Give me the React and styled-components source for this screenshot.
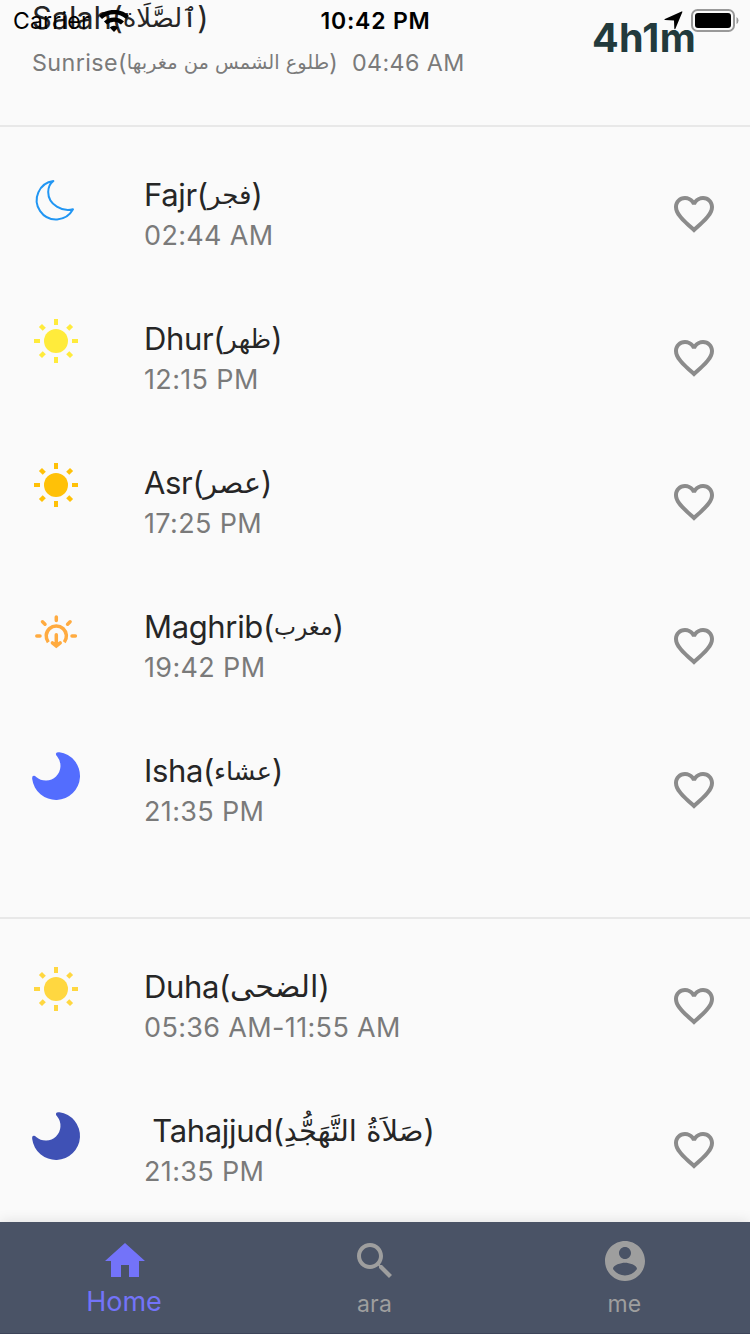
import React from 'react';
import styled, { createGlobalStyle } from 'styled-components';

const Global = createGlobalStyle`
  * { box-sizing: border-box; }
  body { margin: 0; background: #fafafa; font-family: Inter, "DejaVu Sans", sans-serif; }
`;

const Screen = styled.div`
  position: relative;
  display: flex;
  flex-direction: column;
  width: 750px;
  height: 1334px;
  overflow: hidden;
  background: #fafafa;
`;

const StatusBar = styled.div`
  position: absolute;
  inset: 0 0 auto 0;
  height: 41px;
  z-index: 3;
  display: grid;
  grid-template-columns: 1fr auto 1fr;
  align-items: center;
  padding: 0 10px 0 13px;
  color: #000;
`;

const Carrier = styled.div`
  display: flex;
  align-items: center;
  gap: 9px;
  font-size: 23px;
  letter-spacing: 0.2px;
`;

const Clock = styled.div`
  margin: 0 1px 0 -1px;
  font-size: 23px;
  font-weight: 600;
  letter-spacing: 0.8px;
`;

const StatusEnd = styled.div`
  display: flex;
  align-items: center;
  justify-content: flex-end;
  gap: 8px;
`;

const Header = styled.header`
  flex: none;
  display: flex;
  justify-content: space-between;
  height: 127px;
  padding: 0 54px 0 32px;
  border-bottom: 2px solid #e8e8e8;
`;

const Heading = styled.div`
  display: flex;
  height: 42px;
  line-height: 42px;
  margin-top: -3px;
  font-size: 31px;
  letter-spacing: -0.2px;
  color: #262626;
  white-space: pre;
`;

const Caption = styled.div`
  display: flex;
  height: 32px;
  margin-top: 8px;
  line-height: 32px;
  font-size: 23.3px;
  letter-spacing: 0.4px;
  color: #7a7a7a;
  white-space: pre;
`;

const Countdown = styled.div`
  padding-top: 14px;
  line-height: 48px;
  font-size: 39.5px;
  font-weight: 700;
  letter-spacing: 0.3px;
  color: #223a3c;
`;

const Section = styled.section`
  flex: none;
  padding: 15px 0 ${p => (p.$last ? 0 : 55)}px;
  border-bottom: ${p => (p.$last ? 0 : 2)}px solid #e8e8e8;
`;

const Row = styled.div`
  display: grid;
  grid-template-columns: 48px 1fr 48px;
  column-gap: 64px;
  height: 144px;
  padding: 34px 32px 0;
`;

const RowIcon = styled.svg`
  width: 48px;
  height: 48px;
  overflow: visible;
`;

const Title = styled.div`
  height: 40px;
  line-height: 40px;
  margin-top: -1px;
  display: flex;
  font-size: 31px;
  letter-spacing: -0.35px;
  color: #262626;
  white-space: pre;
`;

const Arabic = styled.bdi`
  font-family: "DejaVu Sans", sans-serif;
  font-size: ${p => p.$size}px;
  letter-spacing: 0;
`;

const Time = styled.div`
  height: 40px;
  line-height: 40px;
  margin-top: 1px;
  font-size: 27px;
  letter-spacing: 0.35px;
  color: #7a7a7a;
`;

const Heart = styled.svg`
  width: 48px;
  height: 48px;
  margin-top: 14px;
  fill: #8b8b8b;
`;

const NavBar = styled.nav`
  position: absolute;
  inset: auto 0 0 0;
  z-index: 2;
  display: grid;
  grid-template-columns: repeat(3, 1fr);
  height: 112px;
  background: #4a5366;
  border-bottom: 1px solid #3d4459;
  box-shadow: 0 -1px 12px rgba(0, 0, 0, 0.1);
`;

const NavItem = styled.div`
  display: flex;
  flex-direction: column;
  align-items: center;
  padding-top: 15px;
  color: ${p => (p.$active ? '#7373f9' : '#9e9e9e')};
`;

const NavIcon = styled.svg`
  width: 48px;
  height: 48px;
  fill: currentColor;
`;

const NavLabel = styled.div`
  line-height: 34px;
  margin-top: ${p => (p.$active ? 0 : 2)}px;
  margin-right: ${p => (p.$active ? 2 : 1)}px;
  font-size: ${p => (p.$active ? 27 : 23)}px;
  letter-spacing: ${p => (p.$active ? 0 : 0.2)}px;
`;

const Sun = ({ color }) => (
  <RowIcon viewBox="0 0 48 48" fill={color}>
    <circle cx="24" cy="21" r="12" />
    {[0, 90, 180, 270].map(a => (
      <rect key={a} x="22" y="-1" width="4" height="6" transform={`rotate(${a} 24 21)`} />
    ))}
    {[45, 135, 225, 315].map(a => (
      <rect key={a} x="21.8" y="-1" width="4.4" height="5.4" transform={`rotate(${a} 24 21)`} />
    ))}
  </RowIcon>
);

const Moon = ({ color }) => (
  <RowIcon viewBox="0 0 48 48" fill={color}>
    <path d="M27.5 .2A24 24 0 1 1 .2 27Q-.2 23.5 2 23.7Q3 23.8 4.2 25A14.7 14.7 0 0 0 25.2 4.6Q23.5 2.6 24 1.4Q24.5-.1 27.5 .2Z" />
  </RowIcon>
);

const MoonOutline = ({ color }) => (
  <RowIcon viewBox="0 0 48 48" fill="none" stroke={color} strokeWidth="2" strokeLinejoin="round">
    <path d="M21.4 5A19.3 19.3 0 1 0 41 33.3C31 36.4 16.2 29 16.2 16C16.2 11 18.4 7.2 21.4 5Z" />
  </RowIcon>
);

const Sunset = ({ color }) => (
  <RowIcon viewBox="0 0 48 48" fill="none" stroke={color} strokeWidth="3.5" strokeLinecap="round">
    <path d="M16.3 34.2A10.1 10.1 0 1 1 32.3 34.2" strokeLinecap="butt" />
    <path d="M24.3 26.8V37M20.4 34.8L24.3 38L28.2 34.8M24.3 9V12.4M4.8 27.9H8M40 27.9H43.4M10.5 13.8L13 16.2M38.1 13.8L35.6 16.2" />
  </RowIcon>
);

const ICONS = { sun: Sun, moon: Moon, moonOutline: MoonOutline, sunset: Sunset };

const DAILY = [
  { name: 'Fajr', arabic: 'فجر', size: 26.2, time: '02:44 AM', icon: 'moonOutline', color: '#2196f3' },
  { name: 'Dhur', arabic: 'ظهر', size: 26, time: '12:15 PM', icon: 'sun', color: '#ffeb3b' },
  { name: 'Asr', arabic: 'عصر', size: 28.6, time: '17:25 PM', icon: 'sun', color: '#ffc107' },
  { name: 'Maghrib', arabic: 'مغرب', size: 23.4, time: '19:42 PM', icon: 'sunset', color: '#ffab40' },
  { name: 'Isha', arabic: 'عشاء', size: 25.6, time: '21:35 PM', icon: 'moon', color: '#536dfe' },
];

const EXTRA = [
  { name: 'Duha', arabic: 'الضحى', size: 30.2, time: '05:36 AM-11:55 AM', icon: 'sun', color: '#ffd740' },
  { name: ' Tahajjud', arabic: 'صَلاَةُ التَّهَجُّدِ', size: 29.1, time: '21:35 PM', icon: 'moon', color: '#3f51b5' },
];

const PrayerRow = ({ name, arabic, size, time, icon, color }) => {
  const Icon = ICONS[icon];
  return (
    <Row>
      <Icon color={color} />
      <div>
        <Title>{name}(<Arabic $size={size}>{arabic}</Arabic>)</Title>
        <Time>{time}</Time>
      </div>
      <Heart viewBox="0 0 24 24">
        <path d="M16.5 3c-1.74 0-3.41.81-4.5 2.09C10.91 3.81 9.24 3 7.5 3 4.42 3 2 5.42 2 8.5c0 3.78 3.4 6.86 8.55 11.54L12 21.35l1.45-1.32C18.6 15.36 22 12.28 22 8.5 22 5.42 19.58 3 16.5 3zm-4.4 15.55l-.1.1-.1-.1C7.14 14.24 4 11.39 4 8.5 4 6.5 5.5 5 7.5 5c1.54 0 3.04.99 3.57 2.36h1.87C13.46 5.99 14.96 5 16.5 5c2 0 3.5 1.5 3.5 3.5 0 2.89-3.14 5.74-7.9 10.05z" />
      </Heart>
    </Row>
  );
};

export default function App() {
  return (
    <Screen>
      <Global />
      <StatusBar>
        <Carrier>
          Carrier
          <svg width="30" height="22" viewBox="0 0 30 22" fill="none" stroke="#000" strokeWidth="4.4">
            <path d="M1.5 7.5A19.5 19.5 0 0 1 28.5 7.5M6.5 13A12.3 12.3 0 0 1 23.5 13" />
            <path d="M15 22L10.7 17.6A6.2 6.2 0 0 1 19.3 17.6Z" fill="#000" stroke="none" />
          </svg>
        </Carrier>
        <Clock>10:42 PM</Clock>
        <StatusEnd>
          <svg width="19" height="19" viewBox="0 0 19 19">
            <path d="M17.6 .5Q18.6 0 18.3 1.3L11.4 17.8Q10.6 18.9 10.3 17.6L10 9.6L1 9Q-.2 8.6 .9 7.9Z" fill="#000" />
          </svg>
          <svg width="49" height="24" viewBox="0 0 49 24">
            <rect x="1" y="1" width="42" height="21" rx="5.5" fill="none" stroke="#999" strokeWidth="2" />
            <rect x="4" y="4" width="36" height="15" rx="3" fill="#000" />
            <path d="M45.5 8Q47.5 9 47.5 11.5T45.5 15Z" fill="#999" />
          </svg>
        </StatusEnd>
      </StatusBar>

      <Header>
        <div>
          <Heading>Salah(<Arabic $size={26}>ٱلصَّلَاة</Arabic>)</Heading>
          <Caption>Sunrise(<Arabic $size={19.4}>طلوع الشمس من مغربها</Arabic>)  04:46 AM</Caption>
        </div>
        <Countdown>4h1m</Countdown>
      </Header>

      <Section>
        {DAILY.map(p => <PrayerRow key={p.name} {...p} />)}
      </Section>
      <Section $last>
        {EXTRA.map(p => <PrayerRow key={p.name} {...p} />)}
      </Section>

      <NavBar>
        <NavItem $active>
          <NavIcon viewBox="0 0 24 24"><path d="M10 20v-6h4v6h5v-8h3L12 3 2 12h3v8z" /></NavIcon>
          <NavLabel $active>Home</NavLabel>
        </NavItem>
        <NavItem>
          <NavIcon viewBox="0 0 24 24">
            <path d="M15.5 14h-.79l-.28-.27C15.41 12.59 16 11.11 16 9.5 16 5.91 13.09 3 9.5 3S3 5.91 3 9.5 5.91 16 9.5 16c1.61 0 3.09-.59 4.23-1.57l.27.28v.79l5 4.99L20.49 19l-4.99-5zm-6 0C7.01 14 5 11.99 5 9.5S7.01 5 9.5 5 14 7.01 14 9.5 11.99 14 9.5 14z" />
          </NavIcon>
          <NavLabel>ara</NavLabel>
        </NavItem>
        <NavItem>
          <NavIcon viewBox="0 0 24 24">
            <path d="M12 2C6.48 2 2 6.48 2 12s4.48 10 10 10 10-4.48 10-10S17.52 2 12 2zm0 3c1.66 0 3 1.34 3 3s-1.34 3-3 3-3-1.34-3-3 1.34-3 3-3zm0 14.2c-2.5 0-4.71-1.28-6-3.22.03-1.99 4-3.08 6-3.08 1.99 0 5.97 1.09 6 3.08-1.29 1.94-3.5 3.22-6 3.22z" />
          </NavIcon>
          <NavLabel>me</NavLabel>
        </NavItem>
      </NavBar>
    </Screen>
  );
}
